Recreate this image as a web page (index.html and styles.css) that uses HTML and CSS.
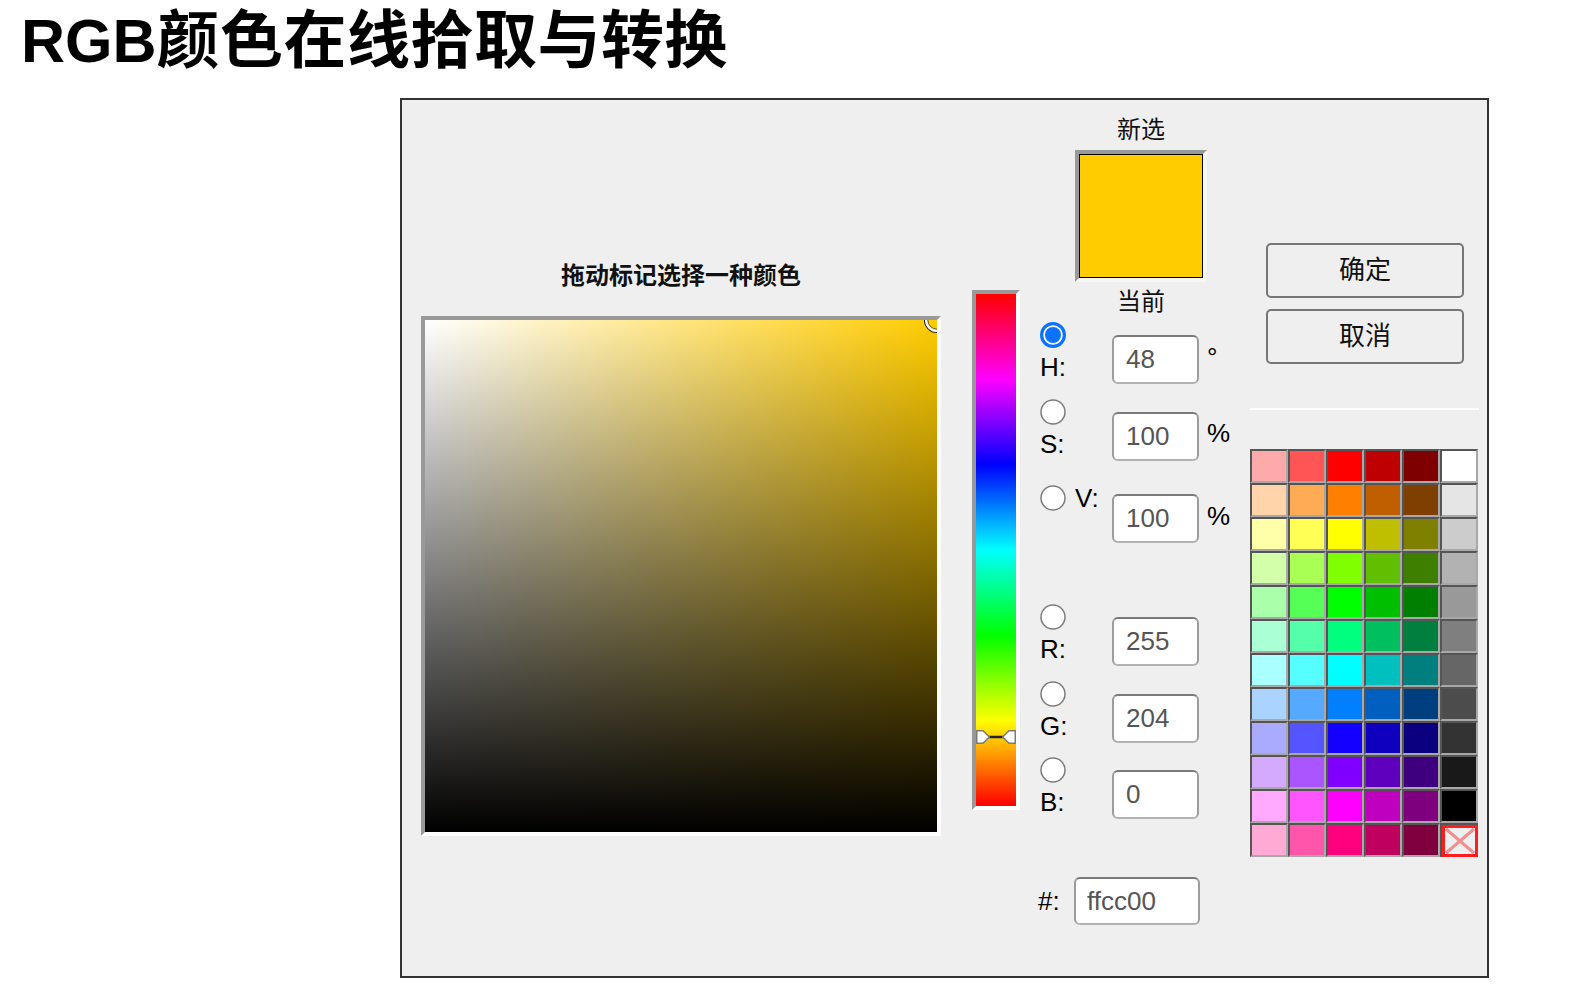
FILE: index.html
```html
<!DOCTYPE html>
<html lang="zh-CN">
<head>
<meta charset="utf-8">
<title>RGB颜色在线拾取与转换</title>
<link rel="stylesheet" href="styles.css">
</head>
<body>
<h1 class="title">RGB<span class="title-cjk">颜色在线拾取与转换</span></h1>
<div class="picker">
  <div class="col-sv">
    <div class="sv-label">拖动标记选择一种颜色</div>
    <div class="inset sv-frame">
      <div class="sv">
        <svg class="sv-cursor" width="30" height="30" viewBox="0 0 30 30">
          <circle cx="15" cy="15" r="12.5" fill="none" stroke="#222" stroke-width="1.2"/>
          <circle cx="15" cy="15" r="10.8" fill="none" stroke="#fff" stroke-width="2.4"/>
          <circle cx="15" cy="15" r="9.2" fill="none" stroke="#333" stroke-width="0.8"/>
        </svg>
      </div>
    </div>
  </div>
  <div class="col-hue">
    <div class="inset hue-frame">
      <div class="hue">
        <svg class="hue-marker" width="40" height="14" viewBox="0 0 40 14">
          <line x1="12" y1="7" x2="28" y2="7" stroke="#222" stroke-width="2.5"/>
          <path d="M0.75 0.75 H7 L13.3 7 L7 13.25 H0.75 Z" fill="#fff" stroke="#7a7a7a" stroke-width="1.5"/>
          <path d="M39.25 0.75 H33 L26.7 7 L33 13.25 H39.25 Z" fill="#fff" stroke="#7a7a7a" stroke-width="1.5"/>
        </svg>
      </div>
    </div>
  </div>
  <div class="col-ctl">
    <div class="preview">
      <div class="pv-label">新选</div>
      <div class="inset pv-frame"><div class="pv-color"></div></div>
      <div class="pv-label pv-cur">当前</div>
    </div>

    <div class="row r-h">
      <div class="rcell">
        <svg class="radio" width="26" height="26" viewBox="0 0 26 26"><circle cx="13" cy="13" r="11.4" fill="#fff" stroke="#0b72ff" stroke-width="3.2"/><circle cx="13" cy="13" r="8" fill="#0b72ff"/></svg>
        <div class="lab">H:</div>
      </div>
      <div class="inp">48</div>
      <div class="unit">°</div>
    </div>

    <div class="row r-s">
      <div class="rcell">
        <svg class="radio" width="26" height="26" viewBox="0 0 26 26"><circle cx="13" cy="13" r="12" fill="#fff" stroke="#7c7c7c" stroke-width="1.5"/></svg>
        <div class="lab">S:</div>
      </div>
      <div class="inp">100</div>
      <div class="unit">%</div>
    </div>

    <div class="row r-v">
      <div class="rcell inline">
        <svg class="radio" width="26" height="26" viewBox="0 0 26 26"><circle cx="13" cy="13" r="12" fill="#fff" stroke="#7c7c7c" stroke-width="1.5"/></svg>
        <div class="lab">V:</div>
      </div>
      <div class="inp">100</div>
      <div class="unit">%</div>
    </div>

    <div class="row r-r">
      <div class="rcell">
        <svg class="radio" width="26" height="26" viewBox="0 0 26 26"><circle cx="13" cy="13" r="12" fill="#fff" stroke="#7c7c7c" stroke-width="1.5"/></svg>
        <div class="lab">R:</div>
      </div>
      <div class="inp">255</div>
    </div>

    <div class="row r-g">
      <div class="rcell">
        <svg class="radio" width="26" height="26" viewBox="0 0 26 26"><circle cx="13" cy="13" r="12" fill="#fff" stroke="#7c7c7c" stroke-width="1.5"/></svg>
        <div class="lab">G:</div>
      </div>
      <div class="inp">204</div>
    </div>

    <div class="row r-b">
      <div class="rcell">
        <svg class="radio" width="26" height="26" viewBox="0 0 26 26"><circle cx="13" cy="13" r="12" fill="#fff" stroke="#7c7c7c" stroke-width="1.5"/></svg>
        <div class="lab">B:</div>
      </div>
      <div class="inp">0</div>
    </div>

    <div class="hexrow">
      <div class="hexlab">#:</div>
      <div class="inp hex">ffcc00</div>
    </div>
  </div>

  <div class="col-right">
    <button class="btn">确定</button>
    <button class="btn btn2">取消</button>
    <div class="sep"></div>
    <div class="swatches">
      <div class="sw" style="background:#ffaaaa"></div><div class="sw" style="background:#ff5555"></div><div class="sw" style="background:#ff0000"></div><div class="sw" style="background:#bf0000"></div><div class="sw" style="background:#7f0000"></div><div class="sw" style="background:#ffffff"></div>
      <div class="sw" style="background:#ffd4aa"></div><div class="sw" style="background:#ffaa55"></div><div class="sw" style="background:#ff7f00"></div><div class="sw" style="background:#bf5f00"></div><div class="sw" style="background:#7f3f00"></div><div class="sw" style="background:#e5e5e5"></div>
      <div class="sw" style="background:#ffffaa"></div><div class="sw" style="background:#ffff55"></div><div class="sw" style="background:#ffff00"></div><div class="sw" style="background:#bfbf00"></div><div class="sw" style="background:#7f7f00"></div><div class="sw" style="background:#cccccc"></div>
      <div class="sw" style="background:#d4ffaa"></div><div class="sw" style="background:#aaff55"></div><div class="sw" style="background:#7fff00"></div><div class="sw" style="background:#5fbf00"></div><div class="sw" style="background:#3f7f00"></div><div class="sw" style="background:#b2b2b2"></div>
      <div class="sw" style="background:#aaffaa"></div><div class="sw" style="background:#55ff55"></div><div class="sw" style="background:#00ff00"></div><div class="sw" style="background:#00bf00"></div><div class="sw" style="background:#007f00"></div><div class="sw" style="background:#999999"></div>
      <div class="sw" style="background:#aaffd4"></div><div class="sw" style="background:#55ffaa"></div><div class="sw" style="background:#00ff7f"></div><div class="sw" style="background:#00bf5f"></div><div class="sw" style="background:#007f3f"></div><div class="sw" style="background:#7f7f7f"></div>
      <div class="sw" style="background:#aaffff"></div><div class="sw" style="background:#55ffff"></div><div class="sw" style="background:#00ffff"></div><div class="sw" style="background:#00bfbf"></div><div class="sw" style="background:#007f7f"></div><div class="sw" style="background:#666666"></div>
      <div class="sw" style="background:#aad4ff"></div><div class="sw" style="background:#55aaff"></div><div class="sw" style="background:#007fff"></div><div class="sw" style="background:#005fbf"></div><div class="sw" style="background:#003f7f"></div><div class="sw" style="background:#4c4c4c"></div>
      <div class="sw" style="background:#aaaaff"></div><div class="sw" style="background:#5555ff"></div><div class="sw" style="background:#1400ff"></div><div class="sw" style="background:#0f00bf"></div><div class="sw" style="background:#0a007f"></div><div class="sw" style="background:#333333"></div>
      <div class="sw" style="background:#d4aaff"></div><div class="sw" style="background:#aa55ff"></div><div class="sw" style="background:#7f00ff"></div><div class="sw" style="background:#5f00bf"></div><div class="sw" style="background:#3f007f"></div><div class="sw" style="background:#191919"></div>
      <div class="sw" style="background:#ffaaff"></div><div class="sw" style="background:#ff55ff"></div><div class="sw" style="background:#ff00ff"></div><div class="sw" style="background:#bf00bf"></div><div class="sw" style="background:#7f007f"></div><div class="sw" style="background:#000000"></div>
      <div class="sw" style="background:#ffaad4"></div><div class="sw" style="background:#ff55aa"></div><div class="sw" style="background:#ff007f"></div><div class="sw" style="background:#bf005f"></div><div class="sw" style="background:#7f003f"></div>
      <div class="sw none">
        <svg width="36" height="32" viewBox="0 0 36 32">
          <rect x="1.5" y="1.5" width="33" height="29" fill="#edf0f0" stroke="#ff1e1e" stroke-width="3"/>
          <line x1="4" y1="4" x2="32" y2="28" stroke="#f29090" stroke-width="3"/>
          <line x1="32" y1="4" x2="4" y2="28" stroke="#f29090" stroke-width="3"/>
        </svg>
      </div>
    </div>
  </div>
</div>
</body>
</html>
```

FILE: styles.css
```css
html, body {
  margin: 0;
  padding: 0;
  background: #ffffff;
}

body {
  font-family: "Liberation Sans", "Noto Sans CJK SC", Arial, sans-serif;
  color: #000;
}

.title {
  margin: 0 0 27px 0;
  padding: 9px 0 0 21px;
  height: 62px;
  font-size: 61px;
  line-height: 62px;
  font-weight: bold;
  color: #000;
  white-space: nowrap;
}

.title-cjk {
  font-size: 63px;
  letter-spacing: 0.5px;
}

.picker {
  box-sizing: border-box;
  width: 1089px;
  height: 880px;
  margin-left: 400px;
  border: 2px solid #333;
  background: #efefef;
  display: flex;
  align-items: flex-start;
}

.inset {
  border-style: solid;
  border-width: 4px;
  border-color: #999 #fff #fff #999;
}

/* SV area */
.col-sv {
  margin-left: 19px;
  width: 520px;
  margin-top: 162px;
}

.sv-label {
  text-align: center;
  font-size: 24px;
  line-height: 28px;
  font-weight: bold;
  color: #111;
}

.sv-frame {
  margin-top: 26px;
  width: 512px;
  height: 512px;
}

.sv {
  position: relative;
  width: 512px;
  height: 512px;
  overflow: hidden;
  background:
    linear-gradient(to top, #000 0%, rgba(0,0,0,0) 100%),
    linear-gradient(to right, #fff 0%, #ffcc00 100%);
}

.sv-cursor {
  position: absolute;
  left: 497px;
  top: -15px;
}

/* Hue bar */
.col-hue {
  margin-left: 31px;
  margin-top: 190px;
}

.hue-frame {
  width: 40px;
  height: 512px;
}

.hue {
  position: relative;
  width: 40px;
  height: 512px;
  background: linear-gradient(to bottom,
    #ff0000 0%,
    #ff00ff 16.667%,
    #0000ff 33.333%,
    #00ffff 50%,
    #00ff00 66.667%,
    #ffff00 83.333%,
    #ff0000 100%);
}

.hue-marker {
  position: absolute;
  left: 0;
  top: 435.5px;
}

/* Controls */
.col-ctl {
  margin-left: 20px;
  width: 210px;
}

.preview {
  margin-left: 35px;
  width: 132px;
  margin-top: 16px;
}

.pv-label {
  text-align: center;
  font-size: 24px;
  line-height: 28px;
  color: #111;
}

.pv-frame {
  margin-top: 6px;
  width: 124px;
  height: 124px;
  border-color: #999 #f6f6f6 #f6f6f6 #999;
}

.pv-color {
  box-sizing: border-box;
  width: 124px;
  height: 124px;
  border: 1px solid #000;
  background: #ffcc00;
}

.pv-cur {
  margin-top: 6px;
}

.row {
  display: flex;
  align-items: flex-start;
}

.r-h { margin-top: 6px; }
.r-s { margin-top: 14.5px; }
.r-v { margin-top: 22.2px; }
.r-r { margin-top: 60.8px; }
.r-g { margin-top: 14.6px; }
.r-b { margin-top: 14.6px; }

.rcell {
  width: 72px;
  flex: none;
}

.rcell.inline {
  display: flex;
  align-items: center;
}

.radio {
  display: block;
}

.lab {
  margin-top: 4px;
  font-size: 26px;
  line-height: 30px;
  color: #000;
}

.rcell.inline .lab {
  margin-top: 0;
  margin-left: 9px;
}

.inp {
  box-sizing: border-box;
  flex: none;
  margin-top: 13px;
  width: 87px;
  height: 49px;
  padding-left: 12px;
  border: 2px solid;
  border-color: #7a7a7a #9c9c9c #b2b2b2 #9c9c9c;
  border-radius: 6px;
  background: #fff;
  font-size: 26px;
  line-height: 45px;
  color: #555;
}

.r-v .inp {
  margin-top: 11.5px;
}

.unit {
  margin-left: 8px;
  margin-top: 19.5px;
  font-size: 26px;
  line-height: 30px;
  color: #000;
}

.r-v .unit {
  margin-top: 18px;
}

.hexrow {
  display: flex;
  align-items: center;
  margin-top: 57.5px;
  margin-left: -2px;
}

.hexlab {
  width: 36px;
  font-size: 26px;
  line-height: 30px;
  color: #000;
}

.inp.hex {
  margin-top: 0;
  width: 126px;
  height: 48px;
  padding-left: 11px;
  line-height: 44px;
}

/* Right column */
.col-right {
  width: 229px;
  margin-top: 143px;
}

.btn {
  display: block;
  box-sizing: border-box;
  width: 198px;
  height: 55px;
  margin: 0 0 0 16px;
  padding: 0;
  border: 2px solid #767676;
  border-radius: 5px;
  background: #efefef;
  font-family: "Liberation Sans", "Noto Sans CJK SC", sans-serif;
  font-size: 26px;
  line-height: 51px;
  color: #111;
  text-align: center;
}

.btn2 {
  margin-top: 11px;
}

.sep {
  margin-top: 43.7px;
  height: 2px;
  background: #fff;
}

.swatches {
  margin-top: 39.3px;
  display: grid;
  grid-template-columns: repeat(6, 38px);
  grid-auto-rows: 34px;
}

.sw {
  box-sizing: border-box;
  border-style: solid;
  border-width: 2px;
  border-color: #555 #a8a8a8 #a8a8a8 #555;
}

.sw.none {
  border-width: 2px 0 0 2px;
  background: #edf0f0;
}

.sw.none svg {
  display: block;
}
```
